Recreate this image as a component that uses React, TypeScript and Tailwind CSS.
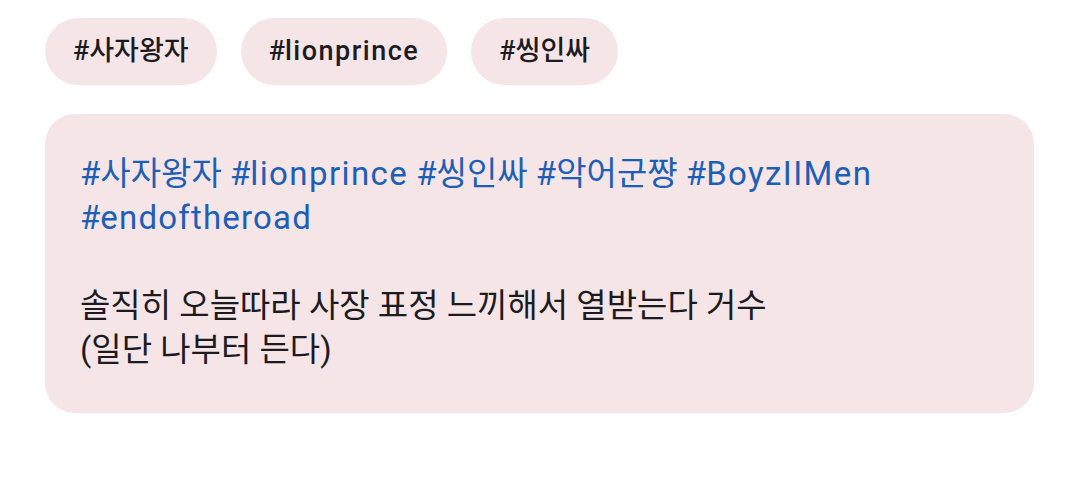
import React from "react";

const font = { fontFamily: 'Roboto, "Noto Sans CJK KR", sans-serif' };

function Mixed({ text, latin }: { text: string; latin: string }) {
  const parts = text.split(/([A-Za-z]+)/);
  return (
    <>
      {parts.map((p, i) =>
        /^[A-Za-z]+$/.test(p) ? (
          <span key={i} className={latin}>
            {p}
          </span>
        ) : (
          <React.Fragment key={i}>{p}</React.Fragment>
        )
      )}
    </>
  );
}

export default function App() {
  const chips = ["#사자왕자", "#lionprince", "#씽인싸"];
  return (
    <div className="w-[1080px] h-[494px] bg-white pt-[18px] pl-[45px]" style={font}>
      <div className="flex gap-[24px]">
        {chips.map((c) => (
          <div
            key={c}
            className="h-[67px] px-[28px] rounded-full bg-[#f6e5e7] flex items-center text-[27px] font-medium text-[#1c1b1f]"
          >
            <Mixed text={c} latin="tracking-[1.5px]" />
          </div>
        ))}
      </div>
      <div className="mt-[29px] w-[989px] h-[299px] rounded-[30px] bg-[#f6e5e7] px-[35px] pt-[38px] text-[33px] leading-[44px]">
        <p className="text-[#1d5fb6]">
          <Mixed text="#사자왕자 #lionprince #씽인싸 #악어군쨩 #BoyzIIMen" latin="tracking-[1.4px]" />
          <br />
          <Mixed text="#endoftheroad" latin="tracking-[1.2px]" />
        </p>
        <p className="mt-[44px] text-[#1c1b1f]">
          솔직히 오늘따라 사장 표정 느끼해서 열받는다 거수
          <br />
          (일단 나부터 든다)
        </p>
      </div>
    </div>
  );
}
